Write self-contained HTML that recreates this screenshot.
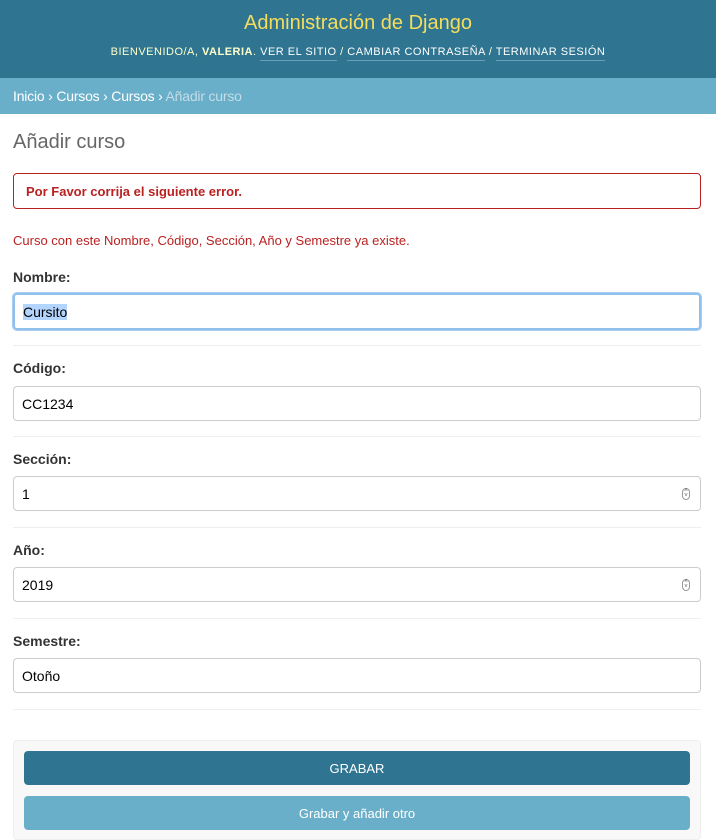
<!DOCTYPE html>
<html><head><meta charset="utf-8"><style>
*{box-sizing:border-box}
body{margin:0;width:716px;height:836px;overflow:hidden;font-family:"Liberation Sans",sans-serif;background:#fff;color:#333}
.hdr{position:absolute;top:0;left:0;width:716px;height:78px;background:#2f7591;text-align:center}
.hdr h1{margin:0;position:absolute;top:12px;width:100%;font-weight:normal;font-size:20px;color:#f5dd5d}
.hdr .u{position:absolute;top:46px;width:100%;font-size:11px;color:#ffc;letter-spacing:.5px}
.hdr .u a{color:#fff;border-bottom:1px solid rgba(255,255,255,.3);padding-bottom:2px}
.bc{position:absolute;top:78px;left:0;width:716px;height:36px;background:#6aafc9;color:#fff;font-size:14px;padding:10px 13px;letter-spacing:-.2px}
.bc span{color:#c4dce8}
h2{position:absolute;top:131px;left:13px;margin:0;font-weight:normal;font-size:20px;color:#666}
.err{position:absolute;top:173px;left:13px;width:688px;height:36px;border:1px solid #ba2121;border-radius:4px;color:#ba2121;font-weight:bold;font-size:13px;padding:10px 12px}
.el{position:absolute;top:233px;left:13px;font-size:13px;color:#ba2121}
label{position:absolute;left:13px;font-weight:bold;font-size:14px;color:#333}
.in{position:absolute;left:13px;width:688px;height:35px;border:1px solid #ccc;border-radius:4px;font-size:14px;padding:9px 8px;color:#000}
.hr{position:absolute;left:13px;width:688px;height:1px;background:#eee}
.sp{position:absolute;right:10px;top:11px;width:8px;height:12px;border:1px solid #999;border-radius:4px;font-size:6px;line-height:5px;text-align:center;color:#555}
.sub{position:absolute;top:740px;left:13px;width:688px;height:100px;background:#f8f8f8;border:1px solid #eee;border-radius:4px}
.btn{position:absolute;left:24px;width:666px;height:34px;border-radius:4px;color:#fff;font-size:13px;text-align:center;line-height:35px}
</style></head><body>
<div class="hdr"><h1>Administración de Django</h1>
<div class="u">BIENVENIDO/A, <b>VALERIA</b>. <a>VER EL SITIO</a> / <a>CAMBIAR CONTRASEÑA</a> / <a>TERMINAR SESIÓN</a></div></div>
<div class="bc">Inicio › Cursos › Cursos › <span>Añadir curso</span></div>
<h2>Añadir curso</h2>
<div class="err">Por Favor corrija el siguiente error.</div>
<div class="el">Curso con este Nombre, Código, Sección, Año y Semestre ya existe.</div>
<label style="top:269px">Nombre:</label>
<div class="in" style="top:293px;height:37px;border:2px solid #8fc1ef;box-shadow:0 0 0 1px #a9cdf1"><span style="background:#b3d4fc">Cursito</span></div>
<div class="hr" style="top:345px"></div>
<label style="top:360px">Código:</label>
<div class="in" style="top:386px">CC1234</div>
<div class="hr" style="top:436px"></div>
<label style="top:451px">Sección:</label>
<div class="in" style="top:476px">1<div class="sp">˄<br>˅</div></div>
<div class="hr" style="top:527px"></div>
<label style="top:542px">Año:</label>
<div class="in" style="top:567px">2019<div class="sp">˄<br>˅</div></div>
<div class="hr" style="top:618px"></div>
<label style="top:633px">Semestre:</label>
<div class="in" style="top:658px">Otoño</div>
<div class="hr" style="top:709px"></div>
<div class="sub"></div>
<div class="btn" style="top:751px;background:#2f7591">GRABAR</div>
<div class="btn" style="top:796px;background:#6aafc9">Grabar y añadir otro</div>
</body></html>
